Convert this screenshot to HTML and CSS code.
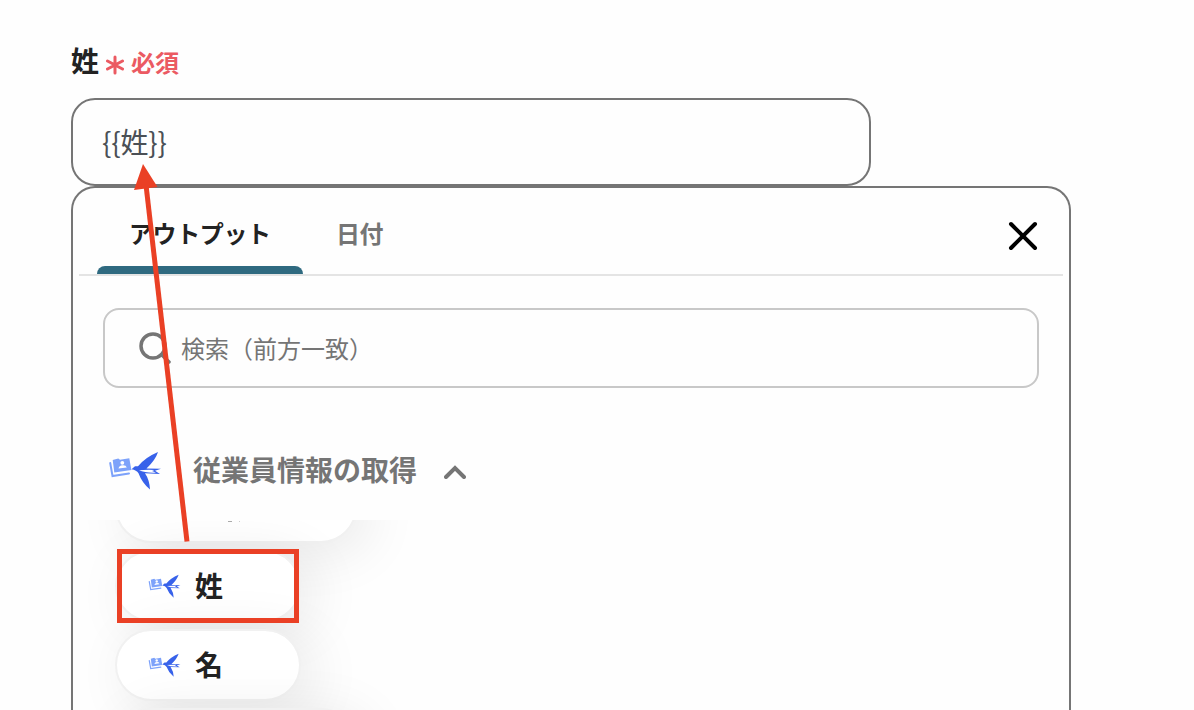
FILE: index.html
```html
<!DOCTYPE html>
<html lang="ja">

<head>
    <meta charset="UTF-8" />
    <meta name="viewport" content="width=device-width, initial-scale=1.0" />
    <title>従業員情報の取得</title>
    <link rel="stylesheet" href="styles.css">
</head>

<body>
    <!-- 共通アイコン -->
    <svg width="0" height="0" class="defs">
        <symbol id="bird" viewBox="0 0 56 44">
            <path d="M3.200 14L5.500 27L22 24.500" fill="none" stroke="#7da2fa" stroke-width="2" />
            <path d="M5.700 11L11.300 9.500L13 10.800L22.300 9.200L24.400 21L7.300 23.500Z" fill="#7da2fa" />
            <circle cx="15.300" cy="13.800" r="1.900" fill="#fff" />
            <path d="M11.500 19.600Q12 16.600 15.500 16.300Q19 16 19.800 18.400Z" fill="#fff" />
            <path d="M24.500 20.200L28 17.300L31 17.300Q38 8.500 51 3Q48.500 11 39.500 19.500L54 19.800L48 21.800L53 25L38 24.300Q42.500 31 43 40.500Q35 34 31.500 24.300Q29.500 21 24.500 20.200Z" fill="#3862ea" />
            <path d="M32 21.200Q38 20.600 47.500 20.900L45 22L49 23.600Q38 24 32 21.200Z" fill="#fff" />
        </symbol>
    </svg>

    <div class="w">
        <div class="label">
            <span class="name">姓</span>
            <svg class="asterisk" width="18" height="20" viewBox="0 0 18 20">
                <path d="M9 2V18M1.500 6L16.500 14M16.500 6L1.500 14" />
            </svg>
            <span class="required">必須</span>
        </div>
        <div class="field">{{姓}}</div>

        <div class="panel">
            <div class="tabs">
                <div class="tab active">アウトプット</div>
                <div class="tab">日付</div>
                <svg class="close" width="30" height="30" viewBox="0 0 30 30">
                    <path d="M3 3L27 27M27 3L3 27" />
                </svg>
            </div>

            <div class="search">
                <svg width="34" height="34" viewBox="0 0 34 34">
                    <circle cx="16" cy="15" r="12" />
                    <path d="M24.500 23.500L32 31" />
                </svg>
                <span>検索（前方一致）</span>
            </div>

            <div class="group">
                <svg class="logo"><use href="#bird" /></svg>
                <span>従業員情報の取得</span>
                <svg class="arrow" width="22" height="14" viewBox="0 0 22 14">
                    <path d="M2 12L11 3L20 12" />
                </svg>
            </div>

            <div class="list">
                <div class="chip first"></div>
                <div class="chip">
                    <svg><use href="#bird" /></svg>
                    <span>姓</span>
                </div>
                <div class="chip">
                    <svg><use href="#bird" /></svg>
                    <span>名</span>
                </div>
                <div class="chip last"></div>
            </div>
        </div>
    </div>

    <!-- 赤枠と矢印 -->
    <div class="mark"></div>
    <svg class="line" width="1194" height="710" viewBox="0 0 1194 710">
        <path d="M187 541.500L146 185" />
        <polygon points="143,164 157.500,187 134,190" />
    </svg>
</body>

</html>
```
FILE: styles.css
```css
* {
    margin: 0;
    padding: 0;
    box-sizing: border-box;
}

body {
    height: 710px;
    overflow: hidden;
    position: relative;
    background: #fefefe;
    color: #222;
    font-family: "Noto Sans CJK JP", sans-serif;
}

svg {
    flex-shrink: 0;
    fill: none;
    stroke-linecap: round;
}

.defs {
    position: absolute;
}

.w {
    height: 710px;
    padding: 40px 0 0 71px;
    overflow: hidden;
}

.label {
    display: flex;
    align-items: center;
    height: 40px;
    font-weight: bold;
}

.label .name {
    font-size: 28px;
}

.asterisk {
    margin: 10px 7px 0 7px;
    stroke: #eb5a62;
    stroke-width: 3;
}

.label .required {
    margin-top: 2px;
    font-size: 24px;
    color: #eb5a62;
}

.field {
    width: 800px;
    height: 88px;
    margin-top: 18px;
    padding-left: 29px;
    border: 2px solid #757575;
    border-radius: 24px;
    line-height: 83px;
    font-size: 28px;
    letter-spacing: -0.2px;
    color: #4b5056;
}

.panel {
    width: 1000px;
    height: 540px;
    border: 2px solid #757575;
    border-bottom: none;
    border-radius: 24px 24px 0 0;
}

.tabs {
    display: flex;
    height: 88px;
    margin: 0 6px;
    padding-left: 18px;
    border-bottom: 2px solid #e4e4e4;
}

.tab {
    display: flex;
    flex-direction: column;
    width: 206px;
    padding-left: 33px;
    line-height: 89px;
    font-size: 24px;
    font-weight: bold;
    letter-spacing: -0.4px;
    color: #757575;
}

.tab.active {
    padding-left: 32px;
    color: #222;
}

/* 選択中タブの下線 */
.tab.active::after {
    content: "";
    height: 8px;
    margin: -11px 0 0 -32px;
    border-radius: 8px 8px 0 0;
    background: #2f6a80;
}

.close {
    margin: 33px 25px 0 auto;
    stroke: #000;
    stroke-width: 4;
}

.search {
    display: flex;
    align-items: center;
    width: 936px;
    height: 80px;
    margin: 32px 0 0 30px;
    padding-left: 32px;
    border: 2px solid #c8c8c8;
    border-radius: 16px;
    font-size: 24px;
    color: #757575;
}

.search svg {
    margin-right: 10px;
    stroke: #757575;
    stroke-width: 3.500;
}

.search span {
    margin-top: -1px;
}

.group {
    display: flex;
    align-items: center;
    height: 48px;
    margin: 57px 0 0 34px;
    font-size: 28px;
    font-weight: bold;
    color: #757575;
}

.logo {
    width: 56px;
    height: 44px;
    margin: 4px 30px 0 0;
}

.arrow {
    margin: 6px 0 0 27px;
    stroke: #757575;
    stroke-width: 4;
}

/* スクロール途中のリスト */
.list {
    height: 190px;
    margin-top: 27px;
    padding-left: 42px;
    overflow: hidden;
}

.chip {
    display: flex;
    align-items: center;
    width: 186px;
    height: 72px;
    margin-bottom: 7px;
    padding-left: 30px;
    border: 2px solid #f1f1f1;
    border-radius: 36px;
    background: #fff;
    background-clip: padding-box;
    box-shadow: 12px 8px 56px rgba(0, 0, 0, 0.09);
    font-size: 28px;
    font-weight: bold;
}

.chip.first {
    width: 242px;
    margin-top: -49px;
}

/* 隠れた文字の下端だけ見える */
.chip.first::before {
    content: "";
    width: 14px;
    height: 1px;
    margin: 29px 0 0 81px;
    background: linear-gradient(90deg, #aaa 4px, transparent 4px, transparent 11px, #ccc 11px, #ccc 12px, transparent 12px);
}

.chip.last {
    width: 242px;
}

.chip svg {
    width: 35px;
    height: 27px;
    margin: 0 13px 0 0;
}

.chip span {
    margin-top: -2px;
}

.mark {
    position: absolute;
    left: 117px;
    top: 549px;
    width: 182px;
    height: 74px;
    border: 5px solid #ea4025;
}

.line {
    position: absolute;
    left: 0;
    top: 0;
    stroke: #ea4025;
    stroke-width: 5;
    stroke-linecap: butt;
}

.line polygon {
    fill: #ea4025;
    stroke: none;
}
```
